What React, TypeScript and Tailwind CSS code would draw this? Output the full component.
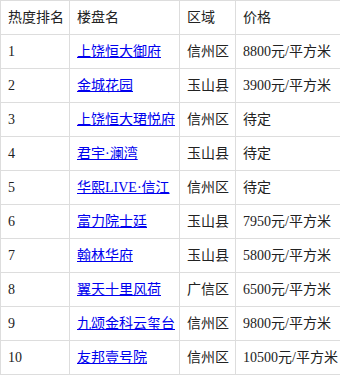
const rows = [
  { rank: '1', name: '上饶恒大御府', area: '信州区', price: '8800元/平方米' },
  { rank: '2', name: '金城花园', area: '玉山县', price: '3900元/平方米' },
  { rank: '3', name: '上饶恒大珺悦府', area: '信州区', price: '待定' },
  { rank: '4', name: '君宇·澜湾', area: '玉山县', price: '待定' },
  { rank: '5', name: '华熙LIVE·信江', area: '信州区', price: '待定' },
  { rank: '6', name: '富力院士廷', area: '玉山县', price: '7950元/平方米' },
  { rank: '7', name: '翰林华府', area: '玉山县', price: '5800元/平方米' },
  { rank: '8', name: '翼天十里风荷', area: '广信区', price: '6500元/平方米' },
  { rank: '9', name: '九颂金科云玺台', area: '信州区', price: '9800元/平方米' },
  { rank: '10', name: '友邦壹号院', area: '信州区', price: '10500元/平方米' },
]

const cell = 'border border-[#dddddd] px-[7px] py-[6px] leading-[21px] text-left font-normal whitespace-nowrap overflow-hidden'

export default function App() {
  return (
    <div className="bg-white w-[340px] h-[375px] overflow-hidden">
      <table
        className="table-fixed border-collapse w-[340px] text-[14px] text-[#222222]"
        style={{ fontFamily: '"Liberation Serif", "Noto Sans CJK SC", serif' }}
      >
        <colgroup>
          <col className="w-[69px]" />
          <col className="w-[110px]" />
          <col className="w-[56px]" />
          <col className="w-[105px]" />
        </colgroup>
        <thead>
          <tr>
            <th className={cell}>热度排名</th>
            <th className={cell}>楼盘名</th>
            <th className={cell}>区域</th>
            <th className={cell}>价格</th>
          </tr>
        </thead>
        <tbody>
          {rows.map((r) => (
            <tr key={r.rank}>
              <td className={cell}>{r.rank}</td>
              <td className={cell}>
                <a href="#" className="text-[#0000ee] underline">
                  {r.name}
                </a>
              </td>
              <td className={cell}>{r.area}</td>
              <td className={cell}>{r.price}</td>
            </tr>
          ))}
        </tbody>
      </table>
    </div>
  )
}
